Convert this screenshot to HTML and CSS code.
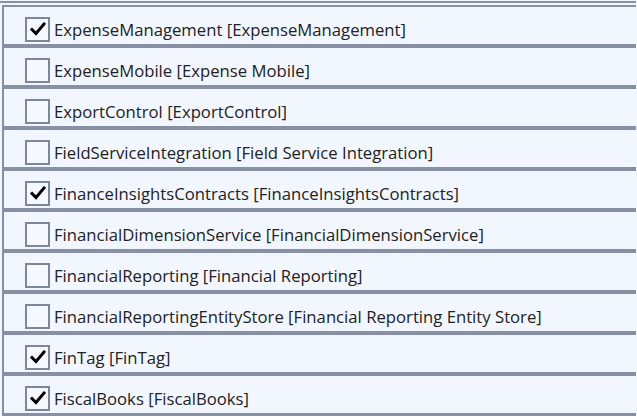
FILE: index.html
```html
<!DOCTYPE html>
<html>
<head>
<meta charset="utf-8">
<link rel="stylesheet" href="styles.css">
</head>
<body>
<div class="topline"></div>
<ul class="list">
  <li class="row"><span class="box checked"><svg viewBox="0 0 20 20"><path d="M4 10.5 L8 14.5 L16 5"/></svg></span><span class="label">ExpenseManagement [ExpenseManagement]</span></li>
  <li class="row"><span class="box"></span><span class="label">ExpenseMobile [Expense Mobile]</span></li>
  <li class="row"><span class="box"></span><span class="label">ExportControl [ExportControl]</span></li>
  <li class="row"><span class="box"></span><span class="label">FieldServiceIntegration [Field Service Integration]</span></li>
  <li class="row"><span class="box checked"><svg viewBox="0 0 20 20"><path d="M4 10.5 L8 14.5 L16 5"/></svg></span><span class="label">FinanceInsightsContracts [FinanceInsightsContracts]</span></li>
  <li class="row"><span class="box"></span><span class="label">FinancialDimensionService [FinancialDimensionService]</span></li>
  <li class="row"><span class="box"></span><span class="label">FinancialReporting [Financial Reporting]</span></li>
  <li class="row"><span class="box"></span><span class="label">FinancialReportingEntityStore [Financial Reporting Entity Store]</span></li>
  <li class="row"><span class="box checked"><svg viewBox="0 0 20 20"><path d="M4 10.5 L8 14.5 L16 5"/></svg></span><span class="label">FinTag [FinTag]</span></li>
  <li class="row"><span class="box checked"><svg viewBox="0 0 20 20"><path d="M4 10.5 L8 14.5 L16 5"/></svg></span><span class="label">FiscalBooks [FiscalBooks]</span></li>
</ul>
</body>
</html>
```
FILE: styles.css
```css
html, body {
  margin: 0;
  padding: 0;
  background: #f1f5fd;
  height: 416px;
  overflow: hidden;
}
body {
  width: 637px;
  padding-top: 1px;
  font-family: "Open Sans", "Noto Sans", sans-serif;
  color: #222222;
}
.topline {
  width: 636px;
  height: 2px;
  background: #8891a4;
}
.list {
  list-style: none;
  margin: 2px 0 0 2px;
  padding: 0;
  width: 632px;
  border-top: 2px solid #8891a4;
  border-left: 2px solid #8891a4;
}
.row {
  height: 37px;
  border-bottom: 4px solid #8891a4;
  display: flex;
  align-items: center;
  padding-left: 21px;
  background: #f2f6fe;
}
.box {
  width: 21px;
  height: 21px;
  border: 2px solid #7c879b;
  background: #f5f8fe;
  margin-top: 7px;
  flex: none;
  display: flex;
  align-items: center;
  justify-content: center;
}
.box svg {
  width: 20px;
  height: 20px;
}
.box path {
  fill: none;
  stroke: #000;
  stroke-width: 3;
  stroke-linecap: square;
}
.label {
  margin-left: 4px;
  font-size: 16.7px;
  margin-top: 7px;
  white-space: nowrap;
}
```
